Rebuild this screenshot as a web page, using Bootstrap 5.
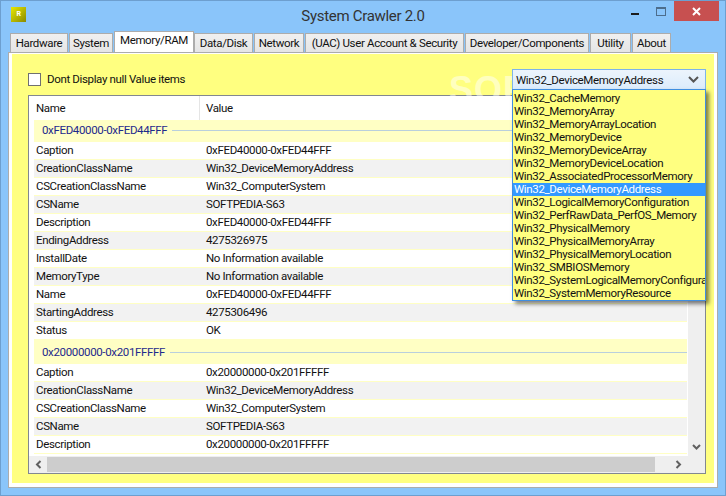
<!DOCTYPE html>
<html><head><meta charset="utf-8">
<link href="https://cdn.jsdelivr.net/npm/bootstrap@5.3.0/dist/css/bootstrap.min.css" rel="stylesheet">
<style>
html,body{margin:0;width:726px;height:496px;overflow:hidden;background:#8ac5fa}
body{font-family:"Roboto","Noto Sans",sans-serif;font-size:11.5px;letter-spacing:-.35px;line-height:18px;color:#111}
.win{position:relative;width:726px;height:496px;border:1px solid #6d9fcf;padding:0 7px 7px}
.titlebar{height:29px;position:relative}
.ttl{font-size:15px;letter-spacing:-.3px;line-height:30px;text-align:center;color:#333;}
.appicon{position:absolute;left:3px;top:6px;width:15px;height:15px;background:linear-gradient(135deg,#e8e800,#8a8a00);color:#fff;font-size:7px;line-height:15px;text-align:center;font-weight:700}
.wbtn{position:absolute;top:0}
.closeb{left:666px;width:45px;height:20px;background:#c75050;color:#fff;display:flex;align-items:center;justify-content:center}
.tabsbar{height:22px;align-items:flex-end;padding-left:2px;background:#8ac5fa;border:0}
.tabsbar .nav-link{height:19px;padding:0;margin:0 1px 0 0;font-size:11.5px;line-height:19px;color:#111;border:1px solid #acacac;border-bottom:0;border-radius:0;background:linear-gradient(#f0f0f0,#e5e5e5);text-align:center;white-space:nowrap}
.tabsbar .nav-link.active{height:21px;line-height:17px;background:#fff;color:#111;border-color:#acacac}
.frame{height:436px;background:#fff;border:1px solid #acacac;padding:1px 3px 4px 3px}
.pane{height:100%;background:#ffff80;padding:13px 8px 10px 16px}
.topr{height:26px;align-items:center;margin-top:-1px}
.chk{width:13px;height:13px;border:1px solid #707070;background:#fff;border-radius:0;margin:0 !important;flex:none;appearance:none}
.chklabel{margin-left:6px}
.lv{margin-top:3px;height:379px;border:1px solid #828790;background:#fff;position:relative;overflow:hidden;display:flex;flex-direction:column}
.lvmain{flex:1;display:flex;min-height:0}
.lvbody{flex:1;min-width:0;overflow:hidden}
.hdr{height:24px;display:flex;line-height:24px;background:#fff}
.hdr>div:first-child{width:171px;padding-left:7px;border-right:1px solid #e5e5e5}
.hdr>div:last-child{padding-left:6px}
.grp{height:22px;background:#ffffc4;color:#1e2a8c;display:flex;align-items:center;padding:0 0 2px 8px;margin-left:5px;gap:5px}
.grp::after{content:"";flex:1;height:1px;background:#b9cfdd}
.g2{height:24px;padding-top:1px;padding-bottom:1px}
.rw{height:18px;display:flex;line-height:17px;background:#fff;margin-left:5px;border-bottom:1px solid #ffffc4;white-space:nowrap}
.rw.alt{background:#f2f2f2}
.rw>span:first-child{width:172px;padding-left:2px}
.vbar{width:17px;background:#efefef;flex:none;position:relative;margin-left:1px}
.hbar{height:17px;background:#efefef;flex:none;position:relative}
.thumb{position:absolute;left:18px;width:608px;top:1px;bottom:1px;background:#cdcdcd}
.arr{position:absolute;width:17px;height:17px;display:flex;align-items:center;justify-content:center}
.combo{position:absolute;left:511px;top:68px;width:194px;height:21px;border:1px solid #7eb4ea;background:linear-gradient(#ecf4fc,#dcecfc);padding-left:3px;line-height:20px;z-index:3;white-space:nowrap}
.combo svg{position:absolute;right:6px;top:6px}
.droplist{position:absolute;left:511px;top:88px;width:194px;height:212px;border:1px solid #3f8ee0;background:#ffff80;z-index:3;box-shadow:3px 3px 4px rgba(0,0,0,.5);padding:2px 0;overflow:hidden}
.droplist>div{height:13px;line-height:13px;white-space:nowrap;padding-left:1px}
.droplist>div.sel{background:#3399ff;color:#fff}
.mark-w{position:absolute;left:448px;top:69px;font-size:36px;line-height:40px;font-weight:700;color:#fff;opacity:.5;z-index:2;font-family:"Liberation Sans",sans-serif;letter-spacing:1px;white-space:nowrap}
</style></head><body>
<div class="win">
 <div class="titlebar">
  <div class="appicon">R</div>
  <div class="ttl">System Crawler 2.0</div>
  <svg class="wbtn" style="left:623px;top:12px" width="9" height="3"><rect width="8" height="2" fill="#1c1c1c"/></svg>
  <svg class="wbtn" style="left:648px;top:6px" width="11" height="10"><rect x=".5" y=".5" width="9" height="8" fill="none" stroke="#4c6d8c"/><rect x="0" y="0" width="10" height="2" fill="#4c6d8c"/></svg>
  <div class="wbtn closeb"><svg width="9" height="9"><path d="M1 1l7 7M8 1l-7 7" stroke="#fff" stroke-width="2"/></svg></div>
 </div>
 <ul class="nav tabsbar">
  <li><a class="nav-link" style="width:58px">Hardware</a></li>
  <li><a class="nav-link" style="width:44px">System</a></li>
  <li><a class="nav-link active" style="width:80px;margin-right:0">Memory/RAM</a></li>
  <li><a class="nav-link" style="width:59px">Data/Disk</a></li>
  <li><a class="nav-link" style="width:50px">Network</a></li>
  <li><a class="nav-link" style="width:159px">(UAC) User Account &amp; Security</a></li>
  <li><a class="nav-link" style="width:124px">Developer/Components</a></li>
  <li><a class="nav-link" style="width:41px">Utility</a></li>
  <li><a class="nav-link" style="width:39px">About</a></li>
 </ul>
 <div class="frame"><div class="pane">
  <div class="d-flex topr"><input type="checkbox" class="chk"><span class="chklabel">Dont Display null Value items</span></div>
  <div class="lv">
   <div class="lvmain">
    <div class="lvbody">
     <div class="hdr"><div>Name</div><div>Value</div></div>
     <div class="grp">0xFED40000-0xFED44FFF</div>
     <div class="rw"><span>Caption</span><span>0xFED40000-0xFED44FFF</span></div>
     <div class="rw alt"><span>CreationClassName</span><span>Win32_DeviceMemoryAddress</span></div>
     <div class="rw"><span>CSCreationClassName</span><span>Win32_ComputerSystem</span></div>
     <div class="rw alt"><span>CSName</span><span>SOFTPEDIA-S63</span></div>
     <div class="rw"><span>Description</span><span>0xFED40000-0xFED44FFF</span></div>
     <div class="rw alt"><span>EndingAddress</span><span>4275326975</span></div>
     <div class="rw"><span>InstallDate</span><span>No Information available</span></div>
     <div class="rw alt"><span>MemoryType</span><span>No Information available</span></div>
     <div class="rw"><span>Name</span><span>0xFED40000-0xFED44FFF</span></div>
     <div class="rw alt"><span>StartingAddress</span><span>4275306496</span></div>
     <div class="rw"><span>Status</span><span>OK</span></div>
     <div class="grp g2">0x20000000-0x201FFFFF</div>
     <div class="rw"><span>Caption</span><span>0x20000000-0x201FFFFF</span></div>
     <div class="rw alt"><span>CreationClassName</span><span>Win32_DeviceMemoryAddress</span></div>
     <div class="rw"><span>CSCreationClassName</span><span>Win32_ComputerSystem</span></div>
     <div class="rw alt"><span>CSName</span><span>SOFTPEDIA-S63</span></div>
     <div class="rw"><span>Description</span><span>0x20000000-0x201FFFFF</span></div>
    </div>
    <div class="vbar"><div class="arr" style="bottom:0;left:0"><svg width="9" height="7"><path d="M1 1l3.5 3.5L8 1" fill="none" stroke="#606060" stroke-width="2"/></svg></div></div>
   </div>
   <div class="hbar">
    <div class="arr" style="left:1px"><svg width="7" height="9"><path d="M5.5 1L2 4.5 5.5 8" fill="none" stroke="#606060" stroke-width="2"/></svg></div>
    <div class="thumb"></div>
    <div class="arr" style="left:641px"><svg width="7" height="9"><path d="M1.5 1L5 4.5 1.5 8" fill="none" stroke="#606060" stroke-width="2"/></svg></div>
   </div>
  </div>
 </div></div>
 <div class="mark-w">SOFTPEDIA</div>
 <div class="combo">Win32_DeviceMemoryAddress<svg width="11" height="8"><path d="M1 1l4.5 4.5L10 1" fill="none" stroke="#555" stroke-width="2"/></svg></div>
 <div class="droplist">
  <div>Win32_CacheMemory</div><div>Win32_MemoryArray</div><div>Win32_MemoryArrayLocation</div><div>Win32_MemoryDevice</div><div>Win32_MemoryDeviceArray</div><div>Win32_MemoryDeviceLocation</div><div>Win32_AssociatedProcessorMemory</div><div class="sel">Win32_DeviceMemoryAddress</div><div>Win32_LogicalMemoryConfiguration</div><div>Win32_PerfRawData_PerfOS_Memory</div><div>Win32_PhysicalMemory</div><div>Win32_PhysicalMemoryArray</div><div>Win32_PhysicalMemoryLocation</div><div>Win32_SMBIOSMemory</div><div>Win32_SystemLogicalMemoryConfiguration</div><div>Win32_SystemMemoryResource</div>
 </div>
</div>
<script src="https://cdn.jsdelivr.net/npm/bootstrap@5.3.0/dist/js/bootstrap.bundle.min.js"></script>
</body></html>
